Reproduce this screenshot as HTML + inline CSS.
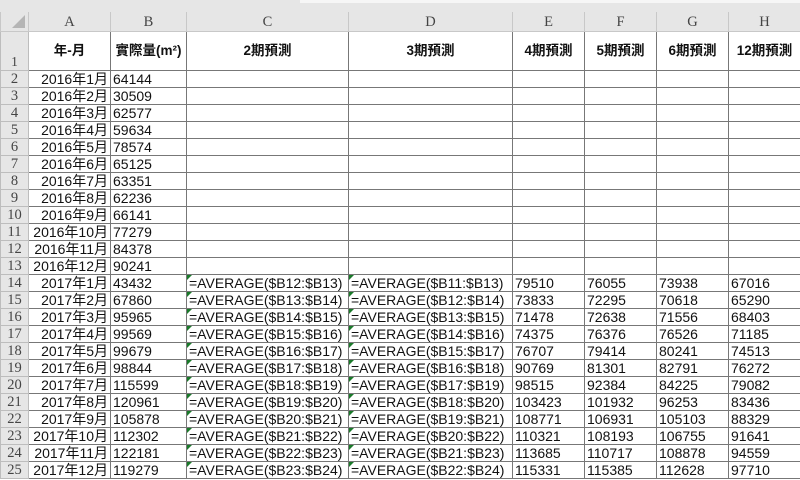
<!DOCTYPE html>
<html><head><meta charset="utf-8"><style>
body{margin:0;width:800px;height:480px;overflow:hidden;background:#fff;font-family:"Liberation Sans","Noto Sans CJK TC",sans-serif;}
.top{height:12px;background:#e6e6e6;position:relative}
.top:after{content:"";position:absolute;left:300px;right:0;top:0;height:3px;background:#f6f6f6}
table{border-collapse:collapse;table-layout:fixed;width:800px}
td{border:1px solid #777;height:16px;padding:0 2px;font-size:14px;line-height:16px;white-space:nowrap;overflow:hidden;color:#111}
td.n{background:#e6e6e6;border-color:#bdbdbd;font-family:"Liberation Serif",serif;color:#444;text-align:center;font-size:14.5px;padding:0}
tr.h td{background:#e6e6e6;border-color:#c8c8c8;border-top:none;height:19px;font-family:"Liberation Serif",serif;color:#444;text-align:center;font-size:14.5px}
tr.r1 td{height:38px;font-weight:bold;text-align:center;font-size:13.5px}
tr.r1 td.n{vertical-align:bottom;font-weight:normal}
td.a{text-align:right}
td.f{position:relative}
td.f:before{content:"";position:absolute;left:0;top:0;border-top:5px solid #1a7a2a;border-right:5px solid transparent}
</style></head><body>
<div class="top"></div>
<table>
<colgroup><col style="width:28px"><col style="width:82px"><col style="width:76px"><col style="width:162px"><col style="width:164px"><col style="width:72px"><col style="width:72px"><col style="width:72px"><col style="width:72px"></colgroup>
<tr class="h"><td class="n" style="position:relative"><span style="position:absolute;right:3px;bottom:3px;border-bottom:13px solid #b5b5b5;border-left:13px solid transparent"></span></td><td>A</td><td>B</td><td>C</td><td>D</td><td>E</td><td>F</td><td>G</td><td>H</td></tr>
<tr class="r1"><td class="n">1</td><td>年-月</td><td>實際量(m²)</td><td>2期預測</td><td>3期預測</td><td>4期預測</td><td>5期預測</td><td>6期預測</td><td>12期預測</td></tr>
<tr><td class="n">2</td><td class="a">2016年1月</td><td>64144</td><td></td><td></td><td></td><td></td><td></td><td></td></tr>
<tr><td class="n">3</td><td class="a">2016年2月</td><td>30509</td><td></td><td></td><td></td><td></td><td></td><td></td></tr>
<tr><td class="n">4</td><td class="a">2016年3月</td><td>62577</td><td></td><td></td><td></td><td></td><td></td><td></td></tr>
<tr><td class="n">5</td><td class="a">2016年4月</td><td>59634</td><td></td><td></td><td></td><td></td><td></td><td></td></tr>
<tr><td class="n">6</td><td class="a">2016年5月</td><td>78574</td><td></td><td></td><td></td><td></td><td></td><td></td></tr>
<tr><td class="n">7</td><td class="a">2016年6月</td><td>65125</td><td></td><td></td><td></td><td></td><td></td><td></td></tr>
<tr><td class="n">8</td><td class="a">2016年7月</td><td>63351</td><td></td><td></td><td></td><td></td><td></td><td></td></tr>
<tr><td class="n">9</td><td class="a">2016年8月</td><td>62236</td><td></td><td></td><td></td><td></td><td></td><td></td></tr>
<tr><td class="n">10</td><td class="a">2016年9月</td><td>66141</td><td></td><td></td><td></td><td></td><td></td><td></td></tr>
<tr><td class="n">11</td><td class="a">2016年10月</td><td>77279</td><td></td><td></td><td></td><td></td><td></td><td></td></tr>
<tr><td class="n">12</td><td class="a">2016年11月</td><td>84378</td><td></td><td></td><td></td><td></td><td></td><td></td></tr>
<tr><td class="n">13</td><td class="a">2016年12月</td><td>90241</td><td></td><td></td><td></td><td></td><td></td><td></td></tr>
<tr><td class="n">14</td><td class="a">2017年1月</td><td>43432</td><td class="f">=AVERAGE($B12:$B13)</td><td class="f">=AVERAGE($B11:$B13)</td><td>79510</td><td>76055</td><td>73938</td><td>67016</td></tr>
<tr><td class="n">15</td><td class="a">2017年2月</td><td>67860</td><td class="f">=AVERAGE($B13:$B14)</td><td class="f">=AVERAGE($B12:$B14)</td><td>73833</td><td>72295</td><td>70618</td><td>65290</td></tr>
<tr><td class="n">16</td><td class="a">2017年3月</td><td>95965</td><td class="f">=AVERAGE($B14:$B15)</td><td class="f">=AVERAGE($B13:$B15)</td><td>71478</td><td>72638</td><td>71556</td><td>68403</td></tr>
<tr><td class="n">17</td><td class="a">2017年4月</td><td>99569</td><td class="f">=AVERAGE($B15:$B16)</td><td class="f">=AVERAGE($B14:$B16)</td><td>74375</td><td>76376</td><td>76526</td><td>71185</td></tr>
<tr><td class="n">18</td><td class="a">2017年5月</td><td>99679</td><td class="f">=AVERAGE($B16:$B17)</td><td class="f">=AVERAGE($B15:$B17)</td><td>76707</td><td>79414</td><td>80241</td><td>74513</td></tr>
<tr><td class="n">19</td><td class="a">2017年6月</td><td>98844</td><td class="f">=AVERAGE($B17:$B18)</td><td class="f">=AVERAGE($B16:$B18)</td><td>90769</td><td>81301</td><td>82791</td><td>76272</td></tr>
<tr><td class="n">20</td><td class="a">2017年7月</td><td>115599</td><td class="f">=AVERAGE($B18:$B19)</td><td class="f">=AVERAGE($B17:$B19)</td><td>98515</td><td>92384</td><td>84225</td><td>79082</td></tr>
<tr><td class="n">21</td><td class="a">2017年8月</td><td>120961</td><td class="f">=AVERAGE($B19:$B20)</td><td class="f">=AVERAGE($B18:$B20)</td><td>103423</td><td>101932</td><td>96253</td><td>83436</td></tr>
<tr><td class="n">22</td><td class="a">2017年9月</td><td>105878</td><td class="f">=AVERAGE($B20:$B21)</td><td class="f">=AVERAGE($B19:$B21)</td><td>108771</td><td>106931</td><td>105103</td><td>88329</td></tr>
<tr><td class="n">23</td><td class="a">2017年10月</td><td>112302</td><td class="f">=AVERAGE($B21:$B22)</td><td class="f">=AVERAGE($B20:$B22)</td><td>110321</td><td>108193</td><td>106755</td><td>91641</td></tr>
<tr><td class="n">24</td><td class="a">2017年11月</td><td>122181</td><td class="f">=AVERAGE($B22:$B23)</td><td class="f">=AVERAGE($B21:$B23)</td><td>113685</td><td>110717</td><td>108878</td><td>94559</td></tr>
<tr><td class="n">25</td><td class="a">2017年12月</td><td>119279</td><td class="f">=AVERAGE($B23:$B24)</td><td class="f">=AVERAGE($B22:$B24)</td><td>115331</td><td>115385</td><td>112628</td><td>97710</td></tr>
</table>
</body></html>
